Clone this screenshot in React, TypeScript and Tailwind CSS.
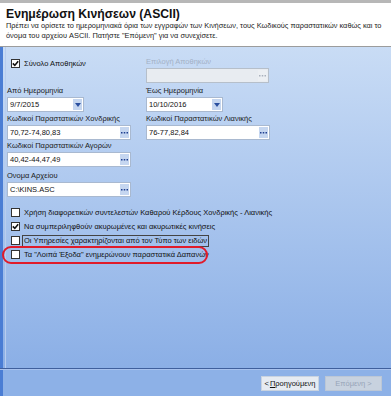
import React from "react";

function Dots({ disabled }: { disabled?: boolean }) {
  const c = disabled ? "#a9b1bd" : "#1f3f8f";
  return (
    <div className={"w-[9px] h-[11px] flex items-center justify-center " + (disabled ? "bg-[#eceff3]" : "bg-[#c5d6f0]")}>
      <svg width="7" height="3" viewBox="0 0 7 3">
        <rect x="0" y="1" width="1.5" height="1.5" fill={c} />
        <rect x="2.75" y="1" width="1.5" height="1.5" fill={c} />
        <rect x="5.5" y="1" width="1.5" height="1.5" fill={c} />
      </svg>
    </div>
  );
}

function Arrow() {
  return (
    <div className="w-[9px] h-[11px] flex items-center justify-center bg-[#c5d6f0]">
      <svg width="6" height="4" viewBox="0 0 6 4">
        <path d="M0 0 L6 0 L3 4 Z" fill="#2a4f9f" />
      </svg>
    </div>
  );
}

function Field({
  label,
  value,
  width,
  kind,
  disabled,
}: {
  label: string;
  value: string;
  width: string;
  kind: "dots" | "arrow";
  disabled?: boolean;
}) {
  return (
    <div className="flex flex-col">
      <div className={"text-[7.5px] leading-[10px] h-[10px] " + (disabled ? "text-[#a3b1c6]" : "text-[#1a1a1a]")}>{label}</div>
      <div
        className={
          width +
          " h-[15px] mt-[1px] border flex items-center justify-between pl-[2px] pr-[1px] " +
          (disabled ? "bg-[#e8ecf1] border-[#b6bfca]" : "bg-white border-[#a9b9d0]")
        }
      >
        <span className="text-[7.5px] text-[#111]">{value}</span>
        {kind === "dots" ? <Dots disabled={disabled} /> : <Arrow />}
      </div>
    </div>
  );
}

function Check({ checked, label, focus }: { checked?: boolean; label: string; focus?: boolean }) {
  return (
    <div className="flex items-center h-[13px] gap-[2px]">
      <div className="w-[9px] h-[9px] bg-white border border-[#333] flex items-center justify-center">
        {checked && (
          <svg width="7" height="7" viewBox="0 0 7 7">
            <path d="M0.8 3.4 L2.8 5.4 L6.2 1.2" stroke="#111" strokeWidth="1.6" fill="none" />
          </svg>
        )}
      </div>
      <span
        className={
          "text-[7.5px] text-[#111] leading-[10px] px-[1px] border " + (focus ? "border-[#444]" : "border-transparent")
        }
      >
        {label}
      </span>
    </div>
  );
}

export default function App() {
  return (
    <div className="w-[391px] h-[396px] flex flex-col overflow-hidden bg-[#8db1e7] font-['Liberation_Sans',sans-serif]">
      <div className="h-[47px] bg-white border-t-[3px] border-t-[#b7b7b7] border-b border-b-[#9c9c9c] pl-[6px] pt-[4px] shrink-0">
        <div className="text-[12.2px] font-bold text-[#111] leading-[14px]">Ενημέρωση Κινήσεων (ASCII)</div>
        <div className="text-[7.4px] leading-[10px] text-[#222] pr-[4px]">
          Πρέπει να ορίσετε το ημερομηνιακά όρια των εγγραφών των Κινήσεων, τους Κωδικούς παραστατικών καθώς και το
          όνομα του αρχείου ASCII. Πατήστε "Επόμενη" για να συνεχίσετε.
        </div>
      </div>
      <div className="relative h-[321px] shrink-0 bg-gradient-to-b from-[#c9dcf5] to-[#8bafe6] border-l-[3px] border-l-[#4a7dd4]">
        <div className="absolute left-[2px] top-0 bottom-0 w-px bg-[#b8cdee]" />
        <div className="pl-[4px] pt-[10px]">
          <div className="grid grid-cols-[139px_1fr]">
            <div className="pl-[4px] pt-0">
              <Check checked label="Σύνολο Αποθηκών" />
            </div>
            <Field label="Επιλογή Αποθηκών" value="" width="w-[123px]" kind="dots" disabled />
          </div>
          <div className="grid grid-cols-[139px_1fr] mt-[3px]">
            <Field label="Από Ημερομηνία" value="9/7/2015" width="w-[77px]" kind="arrow" />
            <Field label="Έως Ημερομηνία" value="10/10/2016" width="w-[77px]" kind="arrow" />
          </div>
          <div className="grid grid-cols-[139px_1fr] mt-[2px]">
            <Field label="Κωδικοί Παραστατικών Χονδρικής" value="70,72-74,80,83" width="w-[124px]" kind="dots" />
            <Field label="Κωδικοί Παραστατικών Λιανικής" value="76-77,82,84" width="w-[124px]" kind="dots" />
          </div>
          <div className="mt-[1px]">
            <Field label="Κωδικοί Παραστατικών Αγορών" value="40,42-44,47,49" width="w-[124px]" kind="dots" />
          </div>
          <div className="mt-[4px]">
            <Field label="Ονομα Αρχείου" value="C:\KINS.ASC" width="w-[124px]" kind="dots" />
          </div>
          <div className="pl-[4px] mt-[9px] flex flex-col gap-[1px]">
            <Check label="Χρήση διαφορετικών συντελεστών Καθαρού Κέρδους Χονδρικής - Λιανικής" />
            <Check checked label="Να συμπεριληφθούν ακυρωμένες και ακυρωτικές κινήσεις" />
            <Check focus label="Οι Υπηρεσίες χαρακτηρίζονται από τον Τύπο των ειδών" />
            <Check label='Τα "Λοιπά Έξοδα" ενημερώνουν παραστατικά Δαπανών' />
          </div>
        </div>
        <div className="absolute left-[-1px] top-[199px] w-[206px] h-[18px] rounded-[9px] border-2 border-[#e01b2a]" />
      </div>
      <div className="h-px bg-[#3f5f9c] shrink-0" />
      <div className="h-px bg-[#a8c2ee] shrink-0" />
      <div className="flex-1 border-l-[3px] border-l-[#4a7dd4] flex justify-end items-start pt-[6px] pr-[9px] gap-[6px]">
        <div className="w-[58px] h-[15px] bg-[#e6ebf2] border border-[#c9d3e0] flex items-center justify-center text-[7.5px] text-[#111]">
          &lt; <span className="underline ml-[1px]">Π</span>ροηγούμενη
        </div>
        <div className="w-[57px] h-[15px] bg-[#c8d2df] border border-[#bcc7d6] flex items-center justify-center text-[7.5px] text-[#97a4b8]">
          Επόμενη &gt;
        </div>
      </div>
    </div>
  );
}
